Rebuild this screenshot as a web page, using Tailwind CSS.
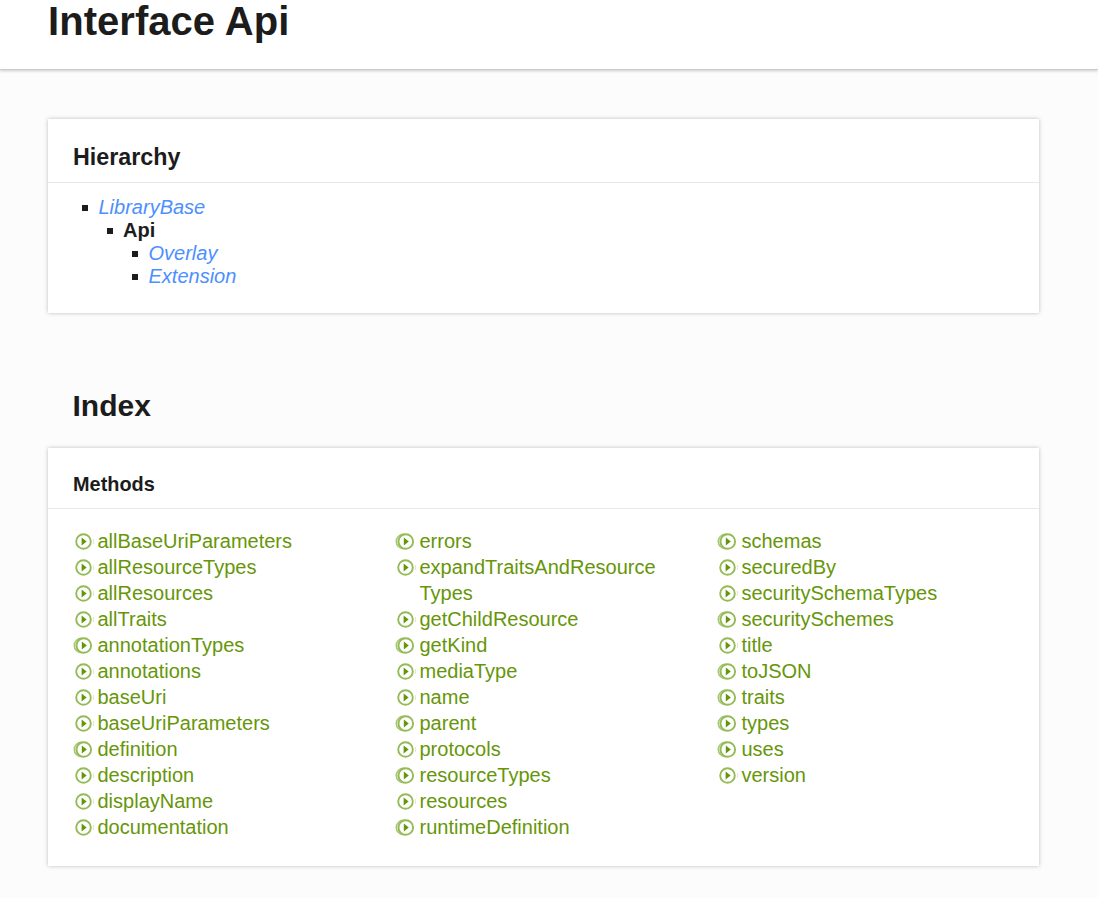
<!DOCTYPE html>
<html lang="en">
<head>
<meta charset="utf-8">
<title>Interface Api</title>
<script src="https://cdn.jsdelivr.net/npm/@tailwindcss/browser@4"></script>
</head>
<body class="h-[898px] overflow-hidden bg-[#fcfcfc] text-[20px] leading-[23px] text-[#1c1c1c]" style="font-family:'Liberation Sans',Arial,sans-serif">
<svg class="hidden">
  <symbol id="own" viewBox="0 0 22 20"><circle cx="10.5" cy="10.5" r="7.3" fill="#fff" stroke="#94bb55" stroke-width="1.9"/><path d="M8.6 6.4v8.2l5-4.1z" fill="#669608"/><path d="M20.3 8q.6 2.5 0 5" fill="none" stroke="#dce8c8" stroke-width="1"/></symbol>
  <symbol id="inh" viewBox="0 0 22 20"><circle cx="8.4" cy="10.5" r="7.2" fill="#dfebcb" stroke="#a5c672" stroke-width="1.4"/><circle cx="10.8" cy="10.5" r="7.3" fill="#fff" stroke="#94bb55" stroke-width="1.9"/><path d="M8.8 6.4v8.2l5-4.1z" fill="#669608"/></symbol>
</svg>
<header class="flex h-[70px] items-start border-b border-[#ccc] bg-white px-12 shadow-[0_1px_3px_rgba(0,0,0,0.2)]">
  <h1 class="-mt-[2px] text-[40px] leading-[46px] font-bold tracking-[0.04px]">Interface Api</h1>
</header>
<main class="pr-[59px] pl-12 pt-[49px]">
  <section class="h-[194px] bg-white shadow-[0_0_4px_rgba(0,0,0,0.25)]">
    <h3 class="h-[64px] border-b border-[#e8e8e8] pt-6 pl-[25px] text-[23.3px] leading-[28px] font-bold">Hierarchy</h3>
    <ul class="pt-[13px] pl-[34px] text-[#4d8fff]">
      <li><div class="flex items-center"><i class="mr-[10.5px] size-[6px] bg-[#1c1c1c]"></i><a class="italic">LibraryBase</a></div>
        <ul class="pl-[25px]">
          <li><div class="flex items-center"><i class="mr-[10px] size-[6px] bg-[#1c1c1c]"></i><span class="font-bold text-[#1c1c1c]">Api</span></div>
            <ul class="pl-[25px]">
              <li class="flex items-center"><i class="mr-[10.5px] size-[6px] bg-[#1c1c1c]"></i><a class="italic">Overlay</a></li>
              <li class="flex items-center"><i class="mr-[10.5px] size-[6px] bg-[#1c1c1c]"></i><a class="italic">Extension</a></li>
            </ul>
          </li>
        </ul>
      </li>
    </ul>
  </section>
  <h2 class="mt-[75px] pl-[24.5px] text-[30px] leading-[36px] font-bold">Index</h2>
  <section class="mt-[24px] h-[418px] bg-white shadow-[0_0_4px_rgba(0,0,0,0.25)]">
    <h3 class="h-[61px] border-b border-[#e8e8e8] pt-[25px] pl-[25px] text-[19.9px] font-bold">Methods</h3>
    <div id="columns" class="grid grid-cols-[322px_322px_322px] pt-[19px] pl-[25px] leading-[26px] text-[#669608]"></div>
  </section>
</main>
<script>
const columns = [
 ["allBaseUriParameters","allResourceTypes","allResources","allTraits","*annotationTypes","annotations","baseUri","baseUriParameters","*definition","description","displayName","documentation"],
 ["*errors","expandTraitsAndResource<br>Types","getChildResource","*getKind","mediaType","name","*parent","protocols","*resourceTypes","resources","*runtimeDefinition"],
 ["*schemas","securedBy","securitySchemaTypes","*securitySchemes","title","*toJSON","*traits","*types","*uses","version"]
];
document.getElementById("columns").innerHTML = columns.map(c => `<ul>${c.map(n => `<li class="flex items-start"><svg class="mt-[3px] mr-[2.5px] h-[20px] w-[22px] shrink-0"><use href="#${n[0]==="*"?"inh":"own"}"/></svg><a>${n.replace("*","")}</a></li>`).join("")}</ul>`).join("");
</script>
</body>
</html>
